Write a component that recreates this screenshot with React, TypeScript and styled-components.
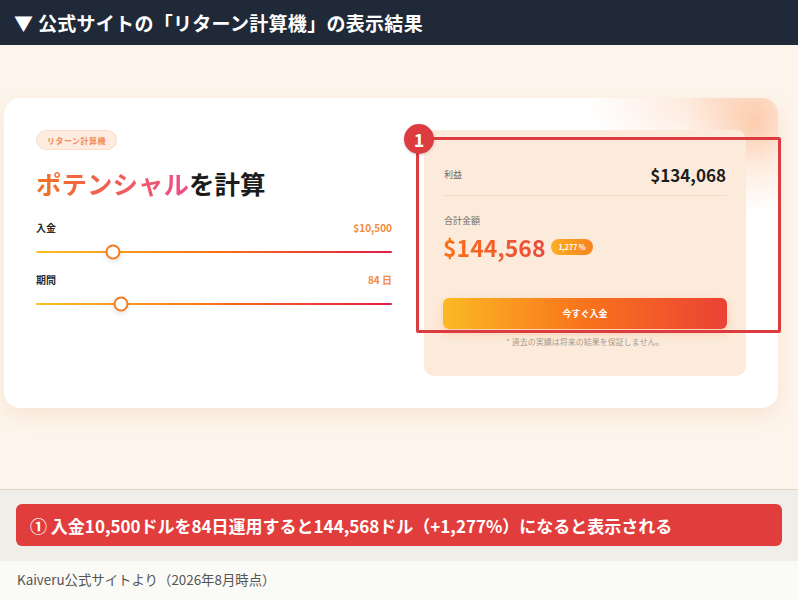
import React from 'react';
import styled, { createGlobalStyle } from 'styled-components';

const GlobalStyle = createGlobalStyle`
  body {
    margin: 0;
    font-family: "Noto Sans CJK JP", "Noto Sans", sans-serif;
    background: #fafaf6;
  }
`;

const Page = styled.div`
  width: 798px;
`;

const Header = styled.div`
  height: 45px;
  background: #1f2937;
  color: #fff;
  display: flex;
  align-items: center;
  padding-left: 14px;
  font-size: 19px;
  font-weight: 700;
  letter-spacing: 0.3px;
`;

const Shot = styled.div`
  height: 445px;
  box-sizing: border-box;
  background: #fdf5ec;
  padding: 53px 20px 0 4px;
  border-bottom: 1px solid #dcd5ca;
`;

const Card = styled.div`
  position: relative;
  height: 310px;
  box-sizing: border-box;
  border-radius: 16px;
  background:
    radial-gradient(ellipse 70px 90px at 97% 8%, rgba(251, 180, 135, 0.6) 0, rgba(252, 200, 165, 0.3) 55%, rgba(255, 255, 255, 0) 100%),
    radial-gradient(ellipse 130px 70px at 92% 0%, rgba(252, 196, 160, 0.45) 0, rgba(255, 255, 255, 0) 100%),
    #fff;
  box-shadow: 0 8px 20px rgba(230, 180, 140, 0.25);
  padding: 32px;
  display: flex;
  gap: 32px;
`;

const Left = styled.div`
  width: 356px;
  display: flex;
  flex-direction: column;
`;

const Pill = styled.div`
  align-self: flex-start;
  height: 20px;
  box-sizing: border-box;
  padding: 0 10px;
  border-radius: 10px;
  background: #feece0;
  border: 1px solid #fbdcc8;
  color: #f08a5a;
  font-size: 8px;
  font-weight: 700;
  display: flex;
  align-items: center;
  letter-spacing: 0.5px;
`;

const Title = styled.h2`
  margin: 17px 0 0;
  font-size: 25.5px;
  line-height: 32px;
  font-weight: 700;
  color: #1b1b1b;
`;

const Accent = styled.span`
  background: linear-gradient(90deg, #f47122, #ec4d8a);
  -webkit-background-clip: text;
  background-clip: text;
  color: transparent;
`;

const SliderBlock = styled.div<{ $top: number }>`
  margin-top: ${(p) => p.$top}px;
`;

const LabelRow = styled.div`
  display: flex;
  justify-content: space-between;
  align-items: center;
  font-size: 10px;
  font-weight: 700;
  line-height: 14px;
`;

const Label = styled.span`
  color: #2a2a2a;
`;

const Value = styled.span`
  color: #f5893a;
`;

const Track = styled.div`
  position: relative;
  margin-top: 16px;
  height: 2px;
  border-radius: 1px;
  background: linear-gradient(90deg, #fbbf24, #f97316 50%, #e11d48);
`;

const Thumb = styled.div`
  position: absolute;
  top: 50%;
  width: 15px;
  height: 15px;
  box-sizing: border-box;
  border-radius: 50%;
  background: #fff;
  border: 2px solid #f47b20;
  transform: translate(-50%, -50%);
  box-shadow: 0 2px 6px rgba(0, 0, 0, 0.12);
`;

const Panel = styled.div`
  width: 322px;
  height: 246px;
  box-sizing: border-box;
  border-radius: 10px;
  background: #fcebdb;
  padding: 32px 19px 0;
  display: flex;
  flex-direction: column;
`;

const ProfitRow = styled.div`
  display: flex;
  justify-content: space-between;
  align-items: center;
  padding: 0 1px 8px;
  border-bottom: 1px solid #f6dcc6;
`;

const Small = styled.span`
  font-size: 9px;
  color: #6b6b6b;
`;

const Profit = styled.span`
  font-size: 17px;
  font-weight: 700;
  color: #1d1d1d;
`;

const TotalLabel = styled(Small)`
  margin: 18px 0 0 1px;
`;

const TotalRow = styled.div`
  display: flex;
  align-items: center;
  gap: 6px;
  margin-top: 3px;
`;

const Total = styled.span`
  font-size: 23px;
  font-weight: 700;
  background: linear-gradient(90deg, #f97316, #ea4a3c);
  -webkit-background-clip: text;
  background-clip: text;
  color: transparent;
`;

const Rate = styled.span`
  height: 16px;
  padding: 0 7px;
  border-radius: 8px;
  background: linear-gradient(90deg, #fbb024, #f7821f);
  color: #fff;
  font-size: 7px;
  font-weight: 700;
  display: flex;
  align-items: center;
`;

const Button = styled.div`
  margin-top: 34px;
  height: 31px;
  border-radius: 6px;
  background: linear-gradient(90deg, #fbb924, #f9731c 50%, #ea4236);
  color: #fff;
  font-size: 9px;
  font-weight: 700;
  display: flex;
  align-items: center;
  justify-content: center;
  box-shadow: 0 4px 10px rgba(249, 115, 22, 0.25);
`;

const Disclaimer = styled.div`
  margin-top: 7px;
  text-align: center;
  font-size: 8px;
  color: #a79a8e;
`;

const Frame = styled.div`
  position: absolute;
  left: 412px;
  top: 39px;
  width: 365px;
  height: 196px;
  box-sizing: border-box;
  border: 3px solid #dc3b3f;
  border-radius: 2px;
`;

const Marker = styled.div`
  position: absolute;
  left: 400px;
  top: 26px;
  width: 30px;
  height: 30px;
  border-radius: 50%;
  background: #dc3b3f;
  color: #fff;
  font-size: 18px;
  font-weight: 700;
  display: flex;
  align-items: center;
  justify-content: center;
  box-shadow: 0 1px 3px rgba(0, 0, 0, 0.2);
`;

const Notes = styled.div`
  background: #efeee9;
  padding: 14px 16px 15px;
`;

const Banner = styled.div`
  height: 42px;
  border-radius: 6px;
  background: #e23d3d;
  color: #fff;
  display: flex;
  align-items: center;
  padding-left: 14px;
  font-size: 17px;
  font-weight: 700;
`;

const Source = styled.div`
  background: #fafaf6;
  padding: 8px 17px;
  font-size: 13.4px;
  color: #555;
  height: 37px;
  box-sizing: border-box;
`;

const sliders = [
  { label: '入金', value: '$10,500', pos: 21.6, top: 22 },
  { label: '期間', value: '84 日', pos: 24, top: 20 },
];

const App: React.FC = () => (
  <Page>
    <GlobalStyle />
    <Header>▼ 公式サイトの「リターン計算機」の表示結果</Header>
    <Shot>
      <Card>
        <Left>
          <Pill>リターン計算機</Pill>
          <Title>
            <Accent>ポテンシャル</Accent>を計算
          </Title>
          {sliders.map((s) => (
            <SliderBlock key={s.label} $top={s.top}>
              <LabelRow>
                <Label>{s.label}</Label>
                <Value>{s.value}</Value>
              </LabelRow>
              <Track>
                <Thumb style={{ left: `${s.pos}%` }} />
              </Track>
            </SliderBlock>
          ))}
        </Left>
        <Panel>
          <ProfitRow>
            <Small>利益</Small>
            <Profit>$134,068</Profit>
          </ProfitRow>
          <TotalLabel>合計金額</TotalLabel>
          <TotalRow>
            <Total>$144,568</Total>
            <Rate>1,277 %</Rate>
          </TotalRow>
          <Button>今すぐ入金</Button>
          <Disclaimer>* 過去の実績は将来の結果を保証しません。</Disclaimer>
        </Panel>
        <Frame />
        <Marker>1</Marker>
      </Card>
    </Shot>
    <Notes>
      <Banner>① 入金10,500ドルを84日運用すると144,568ドル（+1,277%）になると表示される</Banner>
    </Notes>
    <Source>Kaiveru公式サイトより（2026年8月時点）</Source>
  </Page>
);

export default App;
